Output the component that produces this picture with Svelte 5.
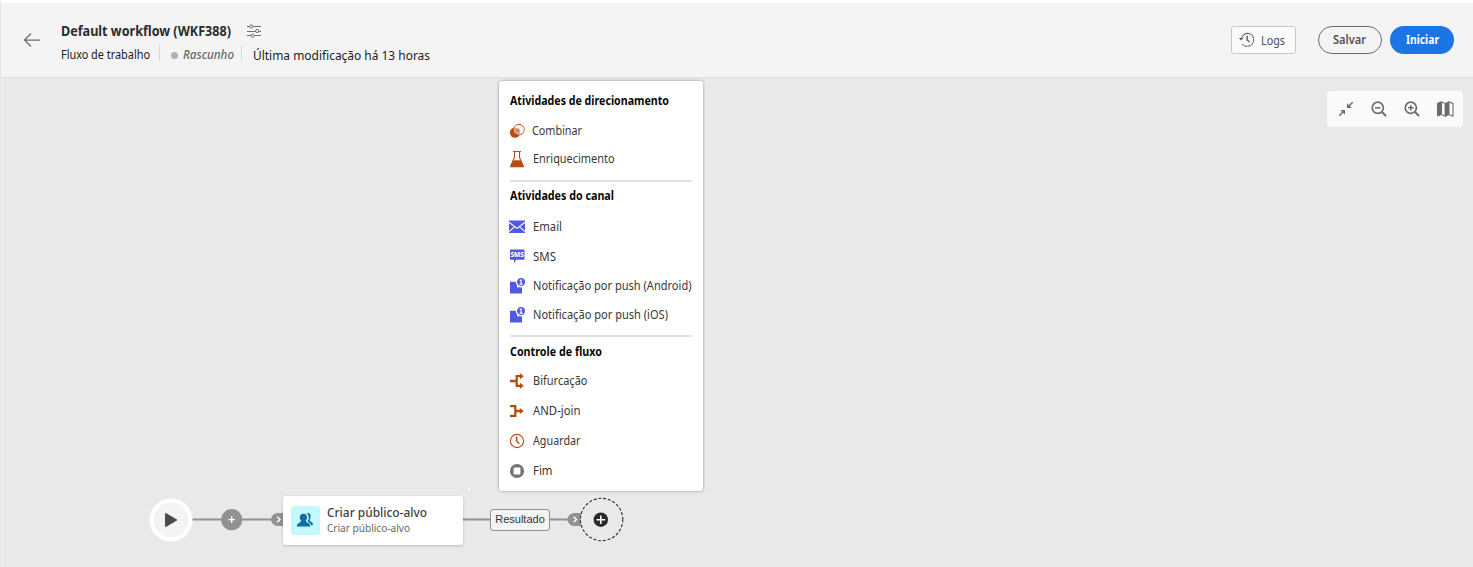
<script>
  // Condenses a label horizontally so that it takes exactly `width` pixels.
  function fit(node, width) {
    const natural = node.getBoundingClientRect().width;
    node.style.transform = `scaleX(${width / natural})`;
    node.style.marginRight = `${width - natural}px`;
  }

  const sections = [
    {
      key: 'targeting', title: 'Atividades de direcionamento', w: 159,
      items: [
        { icon: 'combine', label: 'Combinar', w: 50 },
        { icon: 'flask', label: 'Enriquecimento', w: 81.5 }
      ]
    },
    {
      key: 'channel', title: 'Atividades do canal', w: 104,
      items: [
        { icon: 'email', label: 'Email', w: 29 },
        { icon: 'sms', label: 'SMS', w: 23 },
        { icon: 'push', label: 'Notificação por push (Android)', w: 158.5 },
        { icon: 'push', label: 'Notificação por push (iOS)', w: 135 }
      ]
    },
    {
      key: 'flow', title: 'Controle de fluxo', w: 92,
      items: [
        { icon: 'fork', label: 'Bifurcação', w: 54.5 },
        { icon: 'join', label: 'AND-join', w: 47.5 },
        { icon: 'wait', label: 'Aguardar', w: 47.5 },
        { icon: 'end', label: 'Fim', w: 19.5 }
      ]
    }
  ];
</script>

{#snippet glyph(name)}
  <svg class="glyph" width="16" height="18" viewBox="0 0 16 18">
    {#if name === 'combine'}
      <circle cx="6" cy="10.6" r="5.2" fill="#b74c12" />
      <circle cx="10" cy="7.6" r="5.2" fill="#fff" fill-opacity=".25" stroke="#b74c12" stroke-width="1" />
      <circle cx="9.9" cy="7.7" r="4.3" fill="none" stroke="#fff" stroke-width=".8" />
      <circle cx="8.2" cy="8.8" r="2.7" fill="#cf8860" stroke="#e9c4ae" stroke-width=".8" />
    {:else if name === 'flask'}
      <path d="M4 1.5h8M5.5 1.5v6L1.8 16h12.4L10.5 7.5v-6" fill="none" stroke="#b74c12" stroke-width="1.1" />
      <path d="M4.2 10.3h7.6l3.3 7H1z" fill="#b74c12" />
    {:else if name === 'email'}
      <path d="M0 2.5h16V15H0z" fill="#5159e0" />
      <path d="M0 4.2l8 6.2 8-6.2M0 13.6l5.4-4.8M16 13.6l-5.4-4.8" fill="none" stroke="#fff" stroke-width="1.1" />
    {:else if name === 'sms'}
      <path d="M1 1.5h14.5v10.3H7.2L5 15V11.8H1z" fill="#5159e0" />
      <text x="8.2" y="9.2" text-anchor="middle" textLength="13.4" lengthAdjust="spacingAndGlyphs" class="bubble-text">SMS</text>
    {:else if name === 'push'}
      <path d="M1 4.8h7v5.4h5v6.3H1z" fill="#5159e0" />
      <circle cx="12" cy="5" r="4.6" fill="#5159e0" stroke="#fff" stroke-width="1.2" />
      <path d="M10.8 3.8l1.3-.8v4M10.5 7.1h3.2" fill="none" stroke="#fff" stroke-width="1.1" />
    {:else if name === 'fork'}
      <path d="M1 9h5.5M12 4.2H7.7v9.6H12" fill="none" stroke="#b74c12" stroke-width="2.3" />
      <path d="M11 1.2l3.8 3-3.8 3zM11 10.8l3.8 3-3.8 3z" fill="#b74c12" />
    {:else if name === 'join'}
      <path d="M1 4.2h5.3v9.6H1M6 9h6" fill="none" stroke="#b74c12" stroke-width="2.3" />
      <path d="M10.8 6l4 3-4 3z" fill="#b74c12" />
    {:else if name === 'wait'}
      <circle cx="8" cy="9" r="6.6" fill="none" stroke="#b74c12" stroke-width="1.1" />
      <path d="M7.6 4.5V9l2.7 2.7" fill="none" stroke="#b74c12" stroke-width="1.5" />
    {:else}
      <circle cx="8" cy="9" r="7.1" fill="#757575" />
      <rect x="4.6" y="5.6" width="6.8" height="6.8" rx="1" fill="#fff" />
    {/if}
  </svg>
{/snippet}

<div class="page">
  <header>
    <svg class="back" width="18" height="16" viewBox="0 0 18 16"><path d="M17 8H1.5M8 1.5L1.5 8 8 14.5" fill="none" stroke="#6e6e6e" stroke-width="1.25" /></svg>
    <div class="heading">
      <div class="title-line">
        <h1><span class="fit" use:fit={170}>Default workflow (WKF388)</span></h1>
        <svg width="15" height="14" viewBox="0 0 15 14" fill="#f4f4f4" stroke="#707070">
          <path d="M0 2.5h14M0 7.5h14M0 11.5h14" stroke-width="1" />
          <circle cx="4.2" cy="2.5" r="1.6" /><circle cx="10.2" cy="7" r="1.6" /><circle cx="5.7" cy="11.7" r="1.6" />
        </svg>
      </div>
      <div class="meta">
        <span class="kind"><span class="fit" use:fit={89}>Fluxo de trabalho</span></span>
        <span class="status"><i class="dot"></i><em class="fit" use:fit={51}>Rascunho</em></span>
        <span class="modified"><span class="fit" use:fit={177}>Última modificação há 13 horas</span></span>
      </div>
    </div>
    <div class="actions">
      <button class="logs">
        <svg width="16" height="16" viewBox="0 0 16 16" fill="none" stroke="#666">
          <path d="M2.2 7A6.6 6.6 0 0 1 10 1.5" stroke-width="1.1" />
          <path d="M10 1.5A6.6 6.6 0 1 1 3 12" stroke-width="1.1" stroke-dasharray="3.2 .5" />
          <path d="M8.2 3.8V8l2.8 2" stroke-width="1.5" />
          <path d="M0 6h4.4L2 8.6z" fill="#555" stroke="none" />
        </svg>
        <span class="fit" use:fit={24}>Logs</span>
      </button>
      <button class="pill save"><span class="fit" use:fit={33}>Salvar</span></button>
      <button class="pill start"><span class="fit" use:fit={33}>Iniciar</span></button>
    </div>
  </header>

  <main>
    <div class="tools">
      <svg width="16" height="16" viewBox="0 0 16 16" fill="#6b6b6b" stroke="#6b6b6b"><path d="M9 2.3V7h4.7zM2.3 9H7v4.7z" stroke="none" /><path d="M10.5 5.5L14.7 1.3M5.5 10.5l-4.2 4.2" stroke-width="1.5" /></svg>
      <svg width="16" height="16" viewBox="0 0 16 16" fill="none" stroke="#6b6b6b"><circle cx="6.8" cy="6.8" r="5.6" stroke-width="1.7" /><path d="M10.8 10.8l4.3 4.3" stroke-width="2" /><path d="M4 6.8h5.6" stroke-width="1.5" /></svg>
      <svg width="16" height="16" viewBox="0 0 16 16" fill="none" stroke="#6b6b6b"><circle cx="6.8" cy="6.8" r="5.6" stroke-width="1.7" /><path d="M10.8 10.8l4.3 4.3" stroke-width="2" /><path d="M4 6.8h5.6M6.8 4v5.6" stroke-width="1.5" /></svg>
      <svg width="17" height="16" viewBox="0 0 17 16" fill="none" stroke="#6b6b6b"><path d="M.5 2.2l4-1.5v12.8l-4 1.5zM8.3 2.5l3.7-1.8v12.8l-3.7 1.7z" fill="#6b6b6b" /><path d="M4.5 1l3.8 1.5v12.7l-3.8-1.7M12 1l4 1.5v12.7l-4-1.7" stroke-width="1.1" /></svg>
    </div>

    <svg class="links" width="640" height="60" viewBox="0 0 640 60">
      <path d="M192 26.5h91M463 26.5h28M549 26.5h22" stroke="#929292" stroke-width="2" />
      <rect x="468" y="-5" width="2" height="2" fill="#fff" />
      <circle cx="171" cy="27" r="19.5" fill="#f4f4f4" stroke="#fff" stroke-width="4" />
      <path d="M165 20.2v13.6h1.2L177 27.5v-1L166.2 20.2z" fill="#4a4a4a" />
      <circle cx="231.7" cy="26.7" r="10.6" fill="#929292" />
      <path d="M228.4 26.6h6.6M231.7 23.3v6.6" stroke="#fff" stroke-width="1.4" />
      <path d="M283 20h-5.5a6.5 6.5 0 0 0 0 13h5.5z" fill="#929292" />
      <path d="M277.2 23.8l2.7 2.7-2.7 2.7" fill="none" stroke="#fff" stroke-width="1.4" />
      <path d="M582 20h-8a6.5 6.5 0 0 0 0 13h8z" fill="#929292" />
      <path d="M573.7 23.8l2.7 2.7-2.7 2.7" fill="none" stroke="#fff" stroke-width="1.4" />
      <circle cx="601.6" cy="26.5" r="21.2" fill="#e9e9e9" stroke="#303030" stroke-width="1.1" stroke-dasharray="3 1.8" />
      <circle cx="600.8" cy="26.7" r="7.2" fill="#292929" />
      <path d="M596.5 26.7h8.6M600.8 22.4v8.6" stroke="#fff" stroke-width="1.6" />
    </svg>

    <div class="card">
      <div class="avatar">
        <svg width="18" height="16" viewBox="0 0 18 16" fill="#106f9c">
          <path d="M10.7 1.2c3.3-.7 4.3 1.7 3.8 4.4-.3 1.4-.9 2-.8 3 .1 1.1 3.3 1.2 3.3 4.6h-2c-.3-2.6-3.1-2.7-3.4-4 1.4-1.6 2-5.4-.9-8z" />
          <path d="M7.4 1.8c2.7 0 3.9 1.8 3.6 4.3-.2 1.5-1 2.2-1.1 3.2 0 1.3 4.3 1.4 4.4 5.3H.8c.1-3.9 4.2-4 4.2-5.3 0-1-1-1.7-1.2-3.2-.2-2.5.9-4.3 3.6-4.3z" />
        </svg>
      </div>
      <div class="card-text">
        <b><span class="fit" use:fit={100}>Criar público-alvo</span></b>
        <small><span class="fit" use:fit={83}>Criar público-alvo</span></small>
      </div>
    </div>
    <div class="result">Resultado</div>

    <div class="menu">
      {#each sections as s}
        <section class={s.key}>
          <h2><span class="fit" use:fit={s.w}>{s.title}</span></h2>
          {#each s.items as item}
            <div class="item" class:tight={item.icon === 'combine'}>
              {@render glyph(item.icon)}
              <span class="fit" use:fit={item.w}>{item.label}</span>
            </div>
          {/each}
        </section>
      {/each}
    </div>
  </main>
</div>

<style>
  .page { height: 567px; box-sizing: border-box; border-top: 3px solid #fff; border-left: 1px solid #e4e4e4; display: flex; flex-direction: column; overflow: hidden; background: #f4f4f4; font-family: "Noto Sans", sans-serif; color: #2c2c2c; }
  .page * { box-sizing: border-box; }
  .fit { display: inline-block; white-space: nowrap; transform-origin: 0 50%; }
  svg { display: block; flex: none; overflow: visible; }
  header { height: 75px; flex: none; display: flex; align-items: flex-start; border-bottom: 1px solid #dedede; padding-right: 19px; }
  .back { margin: 29px 0 0 22px; }
  .heading { margin: 17px 0 0 20px; }
  .title-line { display: flex; align-items: center; gap: 16px; height: 22px; }
  h1 { margin: 0; font-size: 13.5px; line-height: 22px; font-weight: 700; }
  .meta { display: flex; height: 20px; margin-top: 3px; font-size: 12.5px; line-height: 20px; color: #1c1c1c; }
  .kind { width: 99px; border-right: 1px solid #d8d8d8; height: 16px; }
  .status { width: 82px; height: 16px; border-right: 1px solid #d8d8d8; padding-left: 11px; display: flex; align-items: center; gap: 5px; }
  .status em { color: #6a6a6a; font-size: 12px; font-weight: 500; padding-top: 4px; }
  .dot { width: 7px; height: 7px; border-radius: 50%; background: #b0b0b0; margin-top: 4px; }
  .modified { padding-left: 11px; line-height: 21px; }
  .actions { margin-left: auto; padding-top: 23px; display: flex; align-items: center; }
  button { font-family: inherit; display: flex; align-items: center; justify-content: center; height: 28px; padding: 0; color: #505050; }
  .logs { width: 65px; border: 1px solid #c8c8c8; border-radius: 3px; background: #fafafa; font-size: 12px; gap: 6px; margin-right: 22px; padding-right: 3px; }
  .logs .fit { padding-top: 1px; }
  .pill { width: 64px; border-radius: 14px; font-size: 12px; font-weight: 600; padding: 0 2px 1px 0; }
  .save { border: 1px solid #6b6b6b; background: transparent; margin-right: 8px; }
  .start { border: 0; background: #1b75e4; color: #fff; font-weight: 700; padding-right: 0; }
  main { position: relative; flex: 1; margin-left: 1px; background: #e9e9e9; }
  .tools { position: absolute; right: 10px; top: 13px; width: 136px; height: 36px; display: flex; align-items: center; gap: 17px; padding-left: 10.5px; background: #fafafa; border-radius: 3px; }
  .links { position: absolute; left: -2px; top: 415px; }
  .card { position: absolute; left: 280.5px; top: 417.5px; width: 180px; height: 49px; display: flex; align-items: center; gap: 7px; padding-left: 8px; background: #fff; border-radius: 3px; box-shadow: 0 1px 3px #0003; }
  .avatar { width: 29px; height: 29px; border-radius: 3px; background: #c5f7ff; display: grid; place-items: center; }
  .avatar svg { margin-right: 1px; }
  .card-text { padding-bottom: 1px; }
  .card-text b, .card-text small { display: block; font-weight: 400; }
  .card-text b { font-size: 12.5px; line-height: 17px; color: #414141; font-weight: 500; }
  .card-text small { font-size: 10.5px; line-height: 14px; color: #666; }
  .result { position: absolute; left: 488px; top: 431px; width: 60px; height: 22px; border: 1px solid #929292; border-radius: 3px; background: #f4f4f4; font: 11px/19px "Liberation Sans", sans-serif; text-align: center; color: #333; }
  .menu { position: absolute; left: 497px; top: 3px; width: 204px; height: 410px; padding: 5px 11px 0 10px; background: #fff; border-radius: 3px; box-shadow: 0 0 3px #0006; }
  section { display: grid; margin-left: 1px; border-bottom: 2px solid #e1e1e1; }
  .targeting { height: 96px; grid-template-rows: 30px 30px 26px; }
  .channel { height: 155px; grid-template-rows: 29px 31px 29px 30px 28px; }
  .flow { height: 150px; grid-template-rows: 29px 30px 30px 30px 29px; border: 0; }
  h2 { margin: 0; font-size: 12px; font-weight: 700; line-height: 28px; color: #080808; }
  .flow h2 { line-height: 29px; }
  .targeting h2 { line-height: 30px; }
  .item { display: flex; align-items: center; gap: 8px; margin-left: -1px; font-size: 12.5px; line-height: 20px; color: #383838; }
  .tight { gap: 7px; }
  .glyph { width: 16px; }
  .bubble-text { font: 800 7.5px "Noto Sans", sans-serif; fill: #fff; }
</style>
